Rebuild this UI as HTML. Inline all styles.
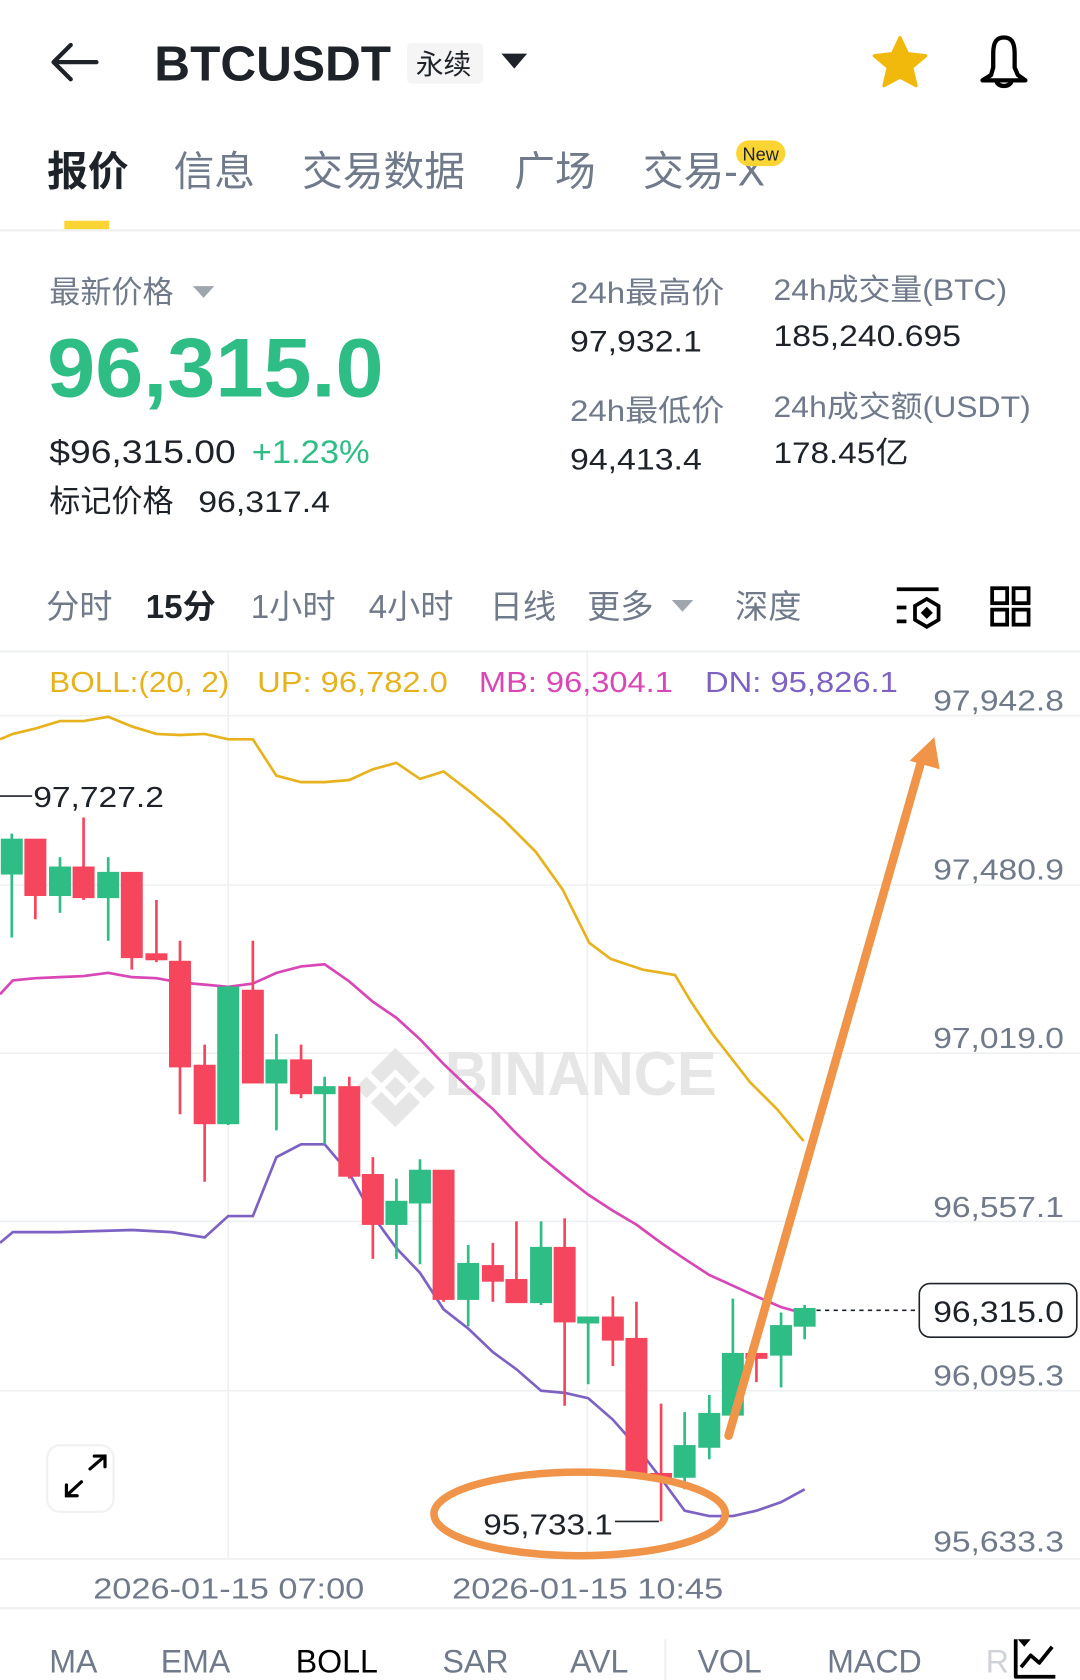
<!DOCTYPE html>
<html><head><meta charset="utf-8"><style>
html,body{margin:0;padding:0;background:#fff;}
svg{display:block;}
text{font-family:"Liberation Sans","Noto Sans CJK SC",sans-serif;}
</style></head><body>
<svg width="1080" height="1680" viewBox="0 0 1008 1568" xmlns="http://www.w3.org/2000/svg">
<rect width="1008" height="1568" fill="#fff"/>
<g stroke="#1e2329" stroke-width="4" fill="none" stroke-linecap="round" stroke-linejoin="round">
<path d="M50 58 H90 M66 42 L50 58 L66 74"/>
</g>
<text x="144" y="75" font-size="46" font-weight="bold" fill="#1e2329" textLength="221" lengthAdjust="spacingAndGlyphs">BTCUSDT</text>
<rect x="380" y="40" width="71" height="38" rx="4" fill="#f5f5f5"/>
<text x="388" y="69" font-size="26" fill="#1e2329">永续</text>
<path d="M468 50 H492 L480 64 Z" fill="#1e2329"/>
<path d="M840 35 L847 50 L864 52 L851 63 L855 80 L840 72 L825 80 L829 63 L816 52 L833 50 Z" fill="#f0b90b" stroke="#f0b90b" stroke-width="3" stroke-linejoin="round"/>
<g fill="none" stroke="#000" stroke-width="4" stroke-linejoin="round">
<path d="M925 70 L927 63 L927 50 C927 38 931 35 937 35 C943 35 947 38 947 50 L947 63 L950 70 L957 75 H917 Z"/>
<path d="M930 75 C930 82 944 82 944 75"/>
</g>
<text x="44" y="173" font-size="38" font-weight="bold" fill="#1e2329">报价</text>
<text x="162" y="173" font-size="38" fill="#707a8a">信息</text>
<text x="282" y="173" font-size="38" fill="#707a8a">交易数据</text>
<text x="480" y="173" font-size="38" fill="#707a8a">广场</text>
<text x="600" y="173" font-size="38" fill="#707a8a">交易-X</text>
<rect x="687" y="131" width="46" height="24" rx="12" fill="#fcd535"/>
<text x="693" y="150" font-size="17" fill="#1e2329">New</text>
<rect x="60" y="206" width="42" height="8" fill="#fcd535"/>
<rect x="0" y="214" width="1008" height="2" fill="#eef0f2"/>
<text x="46" y="283" font-size="29" fill="#707a8a">最新价格</text>
<path d="M180 267 H200 L190 278 Z" fill="#a0a6ae"/>
<text x="44" y="370" font-size="78" font-weight="bold" fill="#2ebd85" textLength="314" lengthAdjust="spacingAndGlyphs">96,315.0</text>
<text x="46" y="432" font-size="30" fill="#1e2329" textLength="174" lengthAdjust="spacingAndGlyphs">$96,315.00</text>
<text x="235" y="432" font-size="30" fill="#2ebd85" textLength="110" lengthAdjust="spacingAndGlyphs">+1.23%</text>
<text x="46" y="478" font-size="29" fill="#1e2329">标记价格</text>
<text x="185" y="478" font-size="28" fill="#1e2329" textLength="123" lengthAdjust="spacingAndGlyphs">96,317.4</text>
<text x="532" y="283" font-size="28" fill="#707a8a" textLength="144" lengthAdjust="spacingAndGlyphs">24h最高价</text>
<text x="532" y="328" font-size="28" fill="#1e2329" textLength="123" lengthAdjust="spacingAndGlyphs">97,932.1</text>
<text x="532" y="393" font-size="28" fill="#707a8a" textLength="144" lengthAdjust="spacingAndGlyphs">24h最低价</text>
<text x="532" y="438" font-size="28" fill="#1e2329" textLength="123" lengthAdjust="spacingAndGlyphs">94,413.4</text>
<text x="722" y="280" font-size="28" fill="#707a8a" textLength="218" lengthAdjust="spacingAndGlyphs">24h成交量(BTC)</text>
<text x="722" y="323" font-size="28" fill="#1e2329" textLength="175" lengthAdjust="spacingAndGlyphs">185,240.695</text>
<text x="722" y="389" font-size="28" fill="#707a8a" textLength="240" lengthAdjust="spacingAndGlyphs">24h成交额(USDT)</text>
<text x="722" y="432" font-size="28" fill="#1e2329" textLength="126" lengthAdjust="spacingAndGlyphs">178.45亿</text>
<g font-size="31" fill="#707a8a">
<text x="43" y="577">分时</text>
<text x="136" y="577" fill="#1e2329" font-weight="bold">15分</text>
<text x="234" y="577">1小时</text>
<text x="344" y="577">4小时</text>
<text x="457" y="577">日线</text>
<text x="548" y="577">更多</text>
<text x="686" y="577">深度</text>
</g>
<path d="M627 560 H647 L637 571 Z" fill="#a0a6ae"/>
<g fill="none" stroke="#000" stroke-width="3.5">
<path d="M837 550 H876 M837 567 H846 M837 580 H846"/>
<path d="M865 559 L876 565.5 L876 578.5 L865 585 L854 578.5 L854 565.5 Z"/>
<rect x="926" y="549" width="14" height="14"/><rect x="946" y="549" width="14" height="14"/>
<rect x="926" y="569" width="14" height="14"/><rect x="946" y="569" width="14" height="14"/>
</g>
<rect x="861" y="568" width="8" height="8" transform="rotate(45 865 572)" fill="#000"/>
<rect x="0" y="607" width="1008" height="2" fill="#eef0f2"/>
<g stroke="#eef0f2" stroke-width="1.5">
<path d="M0 668 H1008 M0 826 H1008 M0 983 H1008 M0 1140 H1008 M0 1298 H1008 M0 1455 H1008"/>
<path d="M213 609 V1455 M548 609 V1455"/>
</g>
<rect x="0" y="1500" width="1008" height="2" fill="#eef0f2"/>
<g fill="#e6e6e6">
<path d="M369 978 L392 1001 L382 1011 L369 998 L356 1011 L346 1001 Z"/>
<path d="M342 1005 L352 1015 L342 1025 L332 1015 Z"/>
<path d="M396 1005 L406 1015 L396 1025 L386 1015 Z"/>
<path d="M369 1005 L379 1015 L369 1025 L359 1015 Z"/>
<path d="M346 1029 L356 1019 L369 1032 L382 1019 L392 1029 L369 1052 Z"/>
</g>
<text x="415" y="1022" font-size="58" font-weight="bold" fill="#e6e6e6" textLength="254" lengthAdjust="spacingAndGlyphs">BINANCE</text>
<g font-size="27">
<text x="46" y="646" fill="#e6b31e" textLength="168" lengthAdjust="spacingAndGlyphs">BOLL:(20, 2)</text>
<text x="240" y="646" fill="#e6b31e" textLength="178" lengthAdjust="spacingAndGlyphs">UP: 96,782.0</text>
<text x="447" y="646" fill="#d946b5" textLength="181" lengthAdjust="spacingAndGlyphs">MB: 96,304.1</text>
<text x="658" y="646" fill="#7d62c4" textLength="180" lengthAdjust="spacingAndGlyphs">DN: 95,826.1</text>
</g>
<g font-size="27" fill="#707a8a">
<text x="871" y="663" textLength="122" lengthAdjust="spacingAndGlyphs">97,942.8</text>
<text x="871" y="821" textLength="122" lengthAdjust="spacingAndGlyphs">97,480.9</text>
<text x="871" y="978" textLength="122" lengthAdjust="spacingAndGlyphs">97,019.0</text>
<text x="871" y="1136" textLength="122" lengthAdjust="spacingAndGlyphs">96,557.1</text>
<text x="871" y="1293" textLength="122" lengthAdjust="spacingAndGlyphs">96,095.3</text>
<text x="871" y="1448" textLength="122" lengthAdjust="spacingAndGlyphs">95,633.3</text>
<text x="87" y="1492" textLength="253" lengthAdjust="spacingAndGlyphs">2026-01-15 07:00</text>
<text x="422" y="1492" textLength="253" lengthAdjust="spacingAndGlyphs">2026-01-15 10:45</text>
</g>
<polyline fill="none" stroke="#e6b31e" stroke-width="2.5" points="0,690 12,685 33,680 56,673 78,673 101,669 123,678 146,685 168,686 191,685 213,690 236,690 258,724 281,730 303,730 326,728 348,718 370,712 392,727 414,720 440,740 470,765 500,795 525,830 550,880 570,895 600,905 630,910 645,935 665,965 700,1010 725,1035 750,1065"/>
<polyline fill="none" stroke="#d946b5" stroke-width="2.5" points="0,928 12,915 33,913 56,912 78,911 101,908 123,912 146,913 168,917 191,919 213,921 236,918 258,908 281,902 303,900 326,916 348,935 370,950 392,970 414,993 437,1015 460,1035 482,1058 505,1080 527,1098 549,1115 572,1130 594,1143 617,1160 639,1175 662,1190 684,1200 706,1210 729,1220 751,1226"/>
<polyline fill="none" stroke="#7d62c4" stroke-width="2.5" points="0,1160 12,1150 56,1150 123,1148 160,1150 191,1155 213,1135 236,1135 258,1080 281,1068 303,1068 326,1095 348,1135 370,1165 392,1188 414,1222 437,1240 460,1262 482,1278 505,1298 527,1300 549,1305 572,1325 594,1350 617,1380 639,1410 662,1415 684,1415 706,1410 729,1402 751,1390"/>
<g stroke-width="2.5">
<g stroke="#2ebd85" fill="#2ebd85">
<line x1="11" y1="778" x2="11" y2="875"/><rect x="2" y="784" width="18" height="31"/>
<line x1="56" y1="800" x2="56" y2="852"/><rect x="47" y="810" width="18" height="25"/>
<line x1="101" y1="800" x2="101" y2="878"/><rect x="92" y="815" width="18" height="22"/>
<line x1="213" y1="920" x2="213" y2="1050"/><rect x="204" y="922" width="18" height="126"/>
<line x1="258" y1="965" x2="258" y2="1055"/><rect x="249" y="990" width="18" height="20"/>
<line x1="303" y1="1005" x2="303" y2="1068"/><rect x="294" y="1015" width="18" height="5"/>
<line x1="370" y1="1100" x2="370" y2="1175"/><rect x="361" y="1122" width="18" height="20"/>
<line x1="392" y1="1082" x2="392" y2="1180"/><rect x="383" y="1093" width="18" height="29"/>
<line x1="437" y1="1162" x2="437" y2="1238"/><rect x="428" y="1180" width="18" height="32"/>
<line x1="505" y1="1140" x2="505" y2="1218"/><rect x="496" y="1165" width="18" height="50"/>
<line x1="549" y1="1230" x2="549" y2="1292"/><rect x="540" y="1230" width="18" height="4"/>
<line x1="639" y1="1318" x2="639" y2="1390"/><rect x="630" y="1350" width="18" height="28"/>
<line x1="662" y1="1302" x2="662" y2="1362"/><rect x="653" y="1320" width="18" height="30"/>
<line x1="684" y1="1212" x2="684" y2="1320"/><rect x="675" y="1264" width="18" height="56"/>
<line x1="729" y1="1225" x2="729" y2="1295"/><rect x="720" y="1238" width="18" height="26"/>
<line x1="751" y1="1218" x2="751" y2="1250"/><rect x="742" y="1222" width="18" height="15"/>
</g>
<g stroke="#f6465d" fill="#f6465d">
<line x1="33" y1="784" x2="33" y2="858"/><rect x="24" y="784" width="18" height="51"/>
<line x1="78" y1="763" x2="78" y2="840"/><rect x="69" y="810" width="18" height="27"/>
<line x1="123" y1="815" x2="123" y2="905"/><rect x="114" y="815" width="18" height="78"/>
<line x1="146" y1="840" x2="146" y2="898"/><rect x="137" y="891" width="18" height="4"/>
<line x1="168" y1="878" x2="168" y2="1040"/><rect x="159" y="898" width="18" height="97"/>
<line x1="191" y1="975" x2="191" y2="1103"/><rect x="182" y="995" width="18" height="53"/>
<line x1="236" y1="878" x2="236" y2="1010"/><rect x="227" y="925" width="18" height="85"/>
<line x1="281" y1="975" x2="281" y2="1025"/><rect x="272" y="990" width="18" height="30"/>
<line x1="326" y1="1005" x2="326" y2="1100"/><rect x="317" y="1015" width="18" height="82"/>
<line x1="348" y1="1080" x2="348" y2="1175"/><rect x="339" y="1097" width="18" height="45"/>
<line x1="414" y1="1093" x2="414" y2="1215"/><rect x="405" y="1093" width="18" height="119"/>
<line x1="460" y1="1160" x2="460" y2="1215"/><rect x="451" y="1182" width="18" height="13"/>
<line x1="482" y1="1140" x2="482" y2="1215"/><rect x="473" y="1195" width="18" height="20"/>
<line x1="527" y1="1137" x2="527" y2="1312"/><rect x="518" y="1165" width="18" height="68"/>
<line x1="572" y1="1210" x2="572" y2="1275"/><rect x="563" y="1230" width="18" height="20"/>
<line x1="594" y1="1215" x2="594" y2="1378"/><rect x="585" y="1250" width="18" height="128"/>
<line x1="617" y1="1310" x2="617" y2="1420"/><rect x="608" y="1376" width="18" height="4"/>
<line x1="706" y1="1264" x2="706" y2="1290"/><rect x="697" y="1264" width="18" height="3"/>
</g>
</g>
<path d="M0 743 H30" stroke="#1e2329" stroke-width="1.5"/>
<text x="31" y="753" font-size="27" fill="#1e2329" textLength="122" lengthAdjust="spacingAndGlyphs">97,727.2</text>
<path d="M574 1420 H615" stroke="#1e2329" stroke-width="1.5"/>
<text x="451" y="1432" font-size="27" fill="#1e2329" textLength="121" lengthAdjust="spacingAndGlyphs">95,733.1</text>
<path d="M762 1223 H858" stroke="#1e2329" stroke-width="1.5" stroke-dasharray="4 4"/>
<rect x="858" y="1198" width="147" height="50" rx="10" fill="#fff" stroke="#1e2329" stroke-width="1.5"/>
<text x="871" y="1234" font-size="28" fill="#1e2329" textLength="122" lengthAdjust="spacingAndGlyphs">96,315.0</text>
<ellipse cx="541" cy="1413" rx="136" ry="39" fill="none" stroke="#f0944a" stroke-width="7"/>
<path d="M680 1340 L860 710" stroke="#f0944a" stroke-width="8" stroke-linecap="round"/>
<path d="M872 688 L877 718 L849 710 Z" fill="#f0944a"/>
<rect x="44" y="1349" width="62" height="62" rx="12" fill="#fff" stroke="#f0f1f2" stroke-width="2"/>
<g stroke="#000" stroke-width="3" fill="none" stroke-linecap="round">
<path d="M84 1371 L98 1359 M88 1359 H98 V1369"/>
<path d="M76 1383 L62 1396 M62 1386 V1396 H72"/>
</g>
<g font-size="30" fill="#707a8a">
<text x="46" y="1561">MA</text>
<text x="150" y="1561">EMA</text>
<text x="276" y="1561" fill="#000">BOLL</text>
<text x="413" y="1561">SAR</text>
<text x="532" y="1561">AVL</text>
<text x="651" y="1561">VOL</text>
<text x="772" y="1561">MACD</text>
<text x="920" y="1561" fill="#cfd2d6">R</text>
</g>
<rect x="620" y="1530" width="2" height="38" fill="#eef0f2"/>
<rect x="940" y="1520" width="68" height="48" fill="#fff"/>
<g stroke="#000" stroke-width="3.5" fill="none" stroke-linejoin="round">
<path d="M948 1530 V1565 H985"/>
<path d="M953 1556 L962 1545 L970 1552 L982 1537"/>
</g>
<path d="M950 1530 H962 L956 1537 Z" fill="#000"/>
</svg>
</body></html>
